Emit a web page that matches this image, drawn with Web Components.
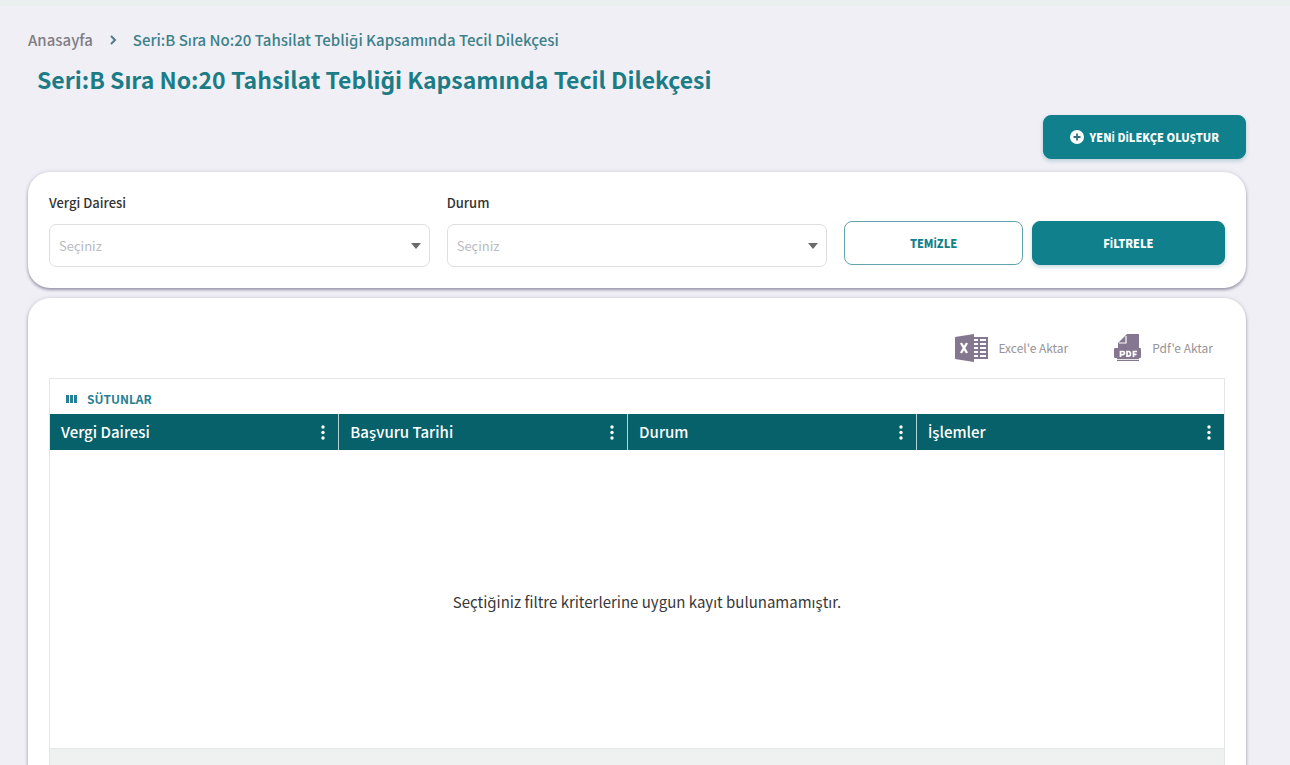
<!DOCTYPE html>
<html lang="tr">
<head>
<meta charset="utf-8">
<meta name="viewport" content="width=device-width, initial-scale=1">
<title>Tecil Dilekçesi</title>
<style>
  body {
    margin: 0;
    background: #f0eff6;
    color: #333;
    font-family: "Noto Sans CJK JP", "Noto Sans", sans-serif;
    --teal: #10808c;
    --teal-dark: #07616a;
  }
</style>
</head>
<body>
<petition-page></petition-page>

<script>
  const define = (name, html, setup) => {
    const template = document.createElement('template');
    template.innerHTML = html;
    customElements.define(name, class extends HTMLElement {
      constructor() {
        super();
        this.attachShadow({ mode: 'open' }).append(template.content.cloneNode(true));
      }
      connectedCallback() {
        if (setup) setup(this, this.shadowRoot);
      }
    });
  };

  const turkish = text => text.replace(/[İŞ]/g, '<span style="font-family:Lato,sans-serif">$&</span>');

  define('bread-crumb', `
    <style>
      :host { display: block; }
      nav { display: flex; align-items: center; gap: 16px; font-size: 15px; line-height: 20px; }
      a { color: #817d84; text-decoration: none; font-weight: 500; }
      .here { color: #3d8189; }
      svg { display: block; width: 8px; height: 10px; }
    </style>
    <nav aria-label="Konum">
      <a href="#"><slot name="root"></slot></a>
      <svg viewBox="0 0 8 10" fill="none" stroke="#4a7d88" stroke-width="2" aria-hidden="true"><path d="M2 1l4 4-4 4"/></svg>
      <a class="here" href="#" aria-current="page"><slot></slot></a>
    </nav>`);

  define('action-button', `
    <style>
      :host { display: block; }
      button {
        display: flex; align-items: center; justify-content: center; gap: 6px;
        box-sizing: border-box; width: 100%; height: 44px; padding: 0 26px;
        border: 1px solid var(--teal); border-radius: 8px;
        background: var(--teal); color: #fff;
        font: 900 11px/18px "Noto Sans CJK JP", "Noto Sans", sans-serif;
        box-shadow: 0 2px 4px #0c62753d; cursor: pointer;
      }
      :host([outline]) button { background: #fff; color: var(--teal); border-color: #62a4ad; box-shadow: none; }
    </style>
    <button type="button"><slot name="icon"></slot><span><slot></slot></span></button>`);

  define('select-field', `
    <style>
      :host { display: block; }
      label { display: block; font-size: 13px; font-weight: 500; line-height: 20px; color: #333; margin-bottom: 11px; }
      .box { display: grid; align-items: center; }
      select, svg { grid-area: 1 / 1; }
      select {
        appearance: none; box-sizing: border-box; width: 100%; height: 43px; padding: 0 32px 0 9px;
        border: 1px solid #dedfe1; border-radius: 7px; background: #fff; color: #b9bbc0;
        font: 400 13px/20px "Noto Sans CJK JP", "Noto Sans", sans-serif;
      }
      svg { justify-self: end; width: 10px; height: 6px; margin-right: 9px; pointer-events: none; }
    </style>
    <label for="pick"></label>
    <div class="box">
      <select id="pick"><option>Seçiniz</option></select>
      <svg viewBox="0 0 10 6" aria-hidden="true"><path d="M0 0h10L5 6z" fill="#696b6d"/></svg>
    </div>`,
    (host, root) => { root.querySelector('label').textContent = host.getAttribute('label'); });

  define('content-card', `
    <style>
      :host {
        display: block; box-sizing: border-box; padding: 21px; background: #fff; border-radius: 22px;
        box-shadow: 0 2px 3px #55506a80, 0 0 4px #55506a30;
      }
    </style>
    <slot></slot>`);

  define('filter-bar', `
    <style>
      :host { display: block; }
      form { display: grid; grid-template-columns: repeat(3, minmax(0, 1fr)); gap: 17px; align-items: end; }
      .actions { display: grid; grid-template-columns: 12fr 13fr; gap: 9px; padding-bottom: 2px; }
    </style>
    <form>
      <select-field label="Vergi Dairesi"></select-field>
      <select-field label="Durum"></select-field>
      <div class="actions">
        <action-button outline>${turkish('TEMİZLE')}</action-button>
        <action-button>${turkish('FİLTRELE')}</action-button>
      </div>
    </form>`);

  define('export-link', `
    <style>
      :host { display: block; }
      button {
        display: flex; align-items: center; gap: 10px; padding: 0; border: 0; background: none; cursor: pointer;
        color: #989399; font: 400 12px/28px "Noto Sans CJK JP", "Noto Sans", sans-serif;
      }
    </style>
    <button type="button"><slot name="icon"></slot><span><slot></slot></span></button>`);

  define('data-grid', `
    <style>
      :host { display: flex; flex-direction: column; border: 1px solid #e5e6e8; border-bottom: 0; }
      .tools { display: flex; align-items: center; height: 35px; padding-left: 16px; }
      .tools button {
        display: flex; align-items: center; gap: 10px; padding: 4px 0 0; border: 0; background: none;
        color: #267f93; font: 700 12px/18px "Noto Sans CJK JP", "Noto Sans", sans-serif; cursor: pointer;
      }
      table { width: 100%; border-collapse: collapse; table-layout: fixed; }
      th { box-sizing: border-box; height: 36px; padding: 0; background: var(--teal-dark); text-align: left; }
      th.w { width: 24.6%; border-right: 1px solid #b6d2d5; }
      .head {
        display: flex; align-items: center; justify-content: space-between; padding: 0 13px 0 11px;
        color: #fff; font-size: 15px; line-height: 20px; font-weight: 500;
      }
      .head button { display: block; padding: 0; border: 0; background: none; cursor: pointer; }
      svg { display: block; }
      .empty { flex: 1; display: grid; place-items: center; padding: 6px 0 0 20px; font-size: 15px; line-height: 22px; color: #383838; }
      .foot { height: 16px; border-top: 1px solid #e6e8e8; background: #eff1f1; }
    </style>
    <div class="tools">
      <button type="button">
        <svg width="11" height="8" viewBox="0 0 11 8" fill="#267f93" aria-hidden="true"><path d="M0 0h3v8H0zM4 0h3v8H4zM8 0h3v8H8z"/></svg>
        <span>SÜTUNLAR</span>
      </button>
    </div>
    <table><thead><tr></tr></thead></table>
    <div class="empty"><slot></slot></div>
    <div class="foot"></div>`,
    (host, root) => {
      const names = host.getAttribute('columns').split('|');
      root.querySelector('tr').innerHTML = names.map((name, i) => `
        <th scope="col" class="${i < names.length - 1 ? 'w' : ''}"><div class="head"><span>${turkish(name)}</span>
          <button type="button" aria-label="${name} menüsü">
            <svg width="4" height="15" viewBox="0 0 4 15" fill="#fff"><circle cx="2" cy="2" r="1.7"/><circle cx="2" cy="7.5" r="1.7"/><circle cx="2" cy="13" r="1.7"/></svg>
          </button></div></th>`).join('');
    });

  define('petition-page', `
    <style>
      :host {
        display: flex; flex-direction: column; box-sizing: border-box; min-height: 100vh;
        padding: 24px 44px 0 28px; border-top: 6px solid #e9efef;
      }
      h1 { margin: 11px 0 0 9px; font-size: 23px; line-height: 36px; font-weight: 700; color: #1b7c86; }
      .top { display: flex; justify-content: flex-end; margin: 18px 0 13px; }
      .top svg { width: 14px; height: 14px; display: block; }
      .results { display: flex; flex-direction: column; flex: 1; margin-top: 10px; padding-top: 36px; padding-bottom: 0; border-radius: 22px 22px 0 0; }
      .exports { display: flex; justify-content: flex-end; gap: 45px; padding: 0 12px 16px 0; }
      .exports svg { display: block; }
      data-grid { flex: 1; }
    </style>
    <bread-crumb><span slot="root">Anasayfa</span>Seri:B Sıra No:20 Tahsilat Tebliği Kapsamında Tecil Dilekçesi</bread-crumb>
    <h1>Seri:B Sıra No:20 Tahsilat Tebliği Kapsamında Tecil Dilekçesi</h1>
    <div class="top">
      <action-button>
        <svg slot="icon" viewBox="0 0 14 14" aria-hidden="true"><circle cx="7" cy="7" r="7" fill="#fff"/><path d="M7 3.500v7M3.500 7h7" stroke="#35717c" stroke-width="1.800"/></svg>
        ${turkish('YENİ DİLEKÇE OLUŞTUR')}
      </action-button>
    </div>
    <content-card><filter-bar></filter-bar></content-card>
    <content-card class="results">
      <div class="exports">
        <export-link>
          <svg slot="icon" width="33" height="28" viewBox="0 0 33 28" aria-hidden="true">
            <path d="M18 3h15v22H18z" fill="#85778f"/>
            <path d="M19 5h4v2h-4zM25 5h6v2h-6zM19 9h4v2h-4zM25 9h6v2h-6zM19 13h4v2h-4zM25 13h6v2h-6zM19 17h4v2h-4zM25 17h6v2h-6zM19 21h4v2h-4zM25 21h6v2h-6z" fill="#fff"/>
            <path d="M0 3L19 0v28L0 25z" fill="#85778f"/>
            <path d="M6 9l6 10M12 9L6 19" stroke="#fff" stroke-width="2.400" fill="none"/>
          </svg>
          Excel'e Aktar
        </export-link>
        <export-link>
          <svg slot="icon" width="29" height="28" viewBox="0 0 29 28" aria-hidden="true">
            <path d="M14 0h12v15H5V9z" fill="#85778f"/>
            <path d="M13 2v7H6" fill="none" stroke="#fff" stroke-width="1.200"/>
            <path d="M2 14h25q1 0 1 1v8q0 1-1 1h-1v3H4v-3H2q-1 0-1-1v-8q0-1 1-1z" fill="#85778f"/>
            <path d="M4 25.500h22" stroke="#fff" stroke-width="0.800"/>
            <g fill="none" stroke="#fff" stroke-width="1.700"><path d="M7.500 23v-5.500H10q1.500 0 1.500 1.600t-1.500 1.600H8M14 17.500v4.700h1.500q2 0 2-2.350t-2-2.350zM20.500 23v-5.500H24M21 20.300h2.500"/></g>
          </svg>
          Pdf'e Aktar
        </export-link>
      </div>
      <data-grid columns="Vergi Dairesi|Başvuru Tarihi|Durum|İşlemler">Seçtiğiniz filtre kriterlerine uygun kayıt bulunamamıştır.</data-grid>
    </content-card>`);
</script>
</body>
</html>
